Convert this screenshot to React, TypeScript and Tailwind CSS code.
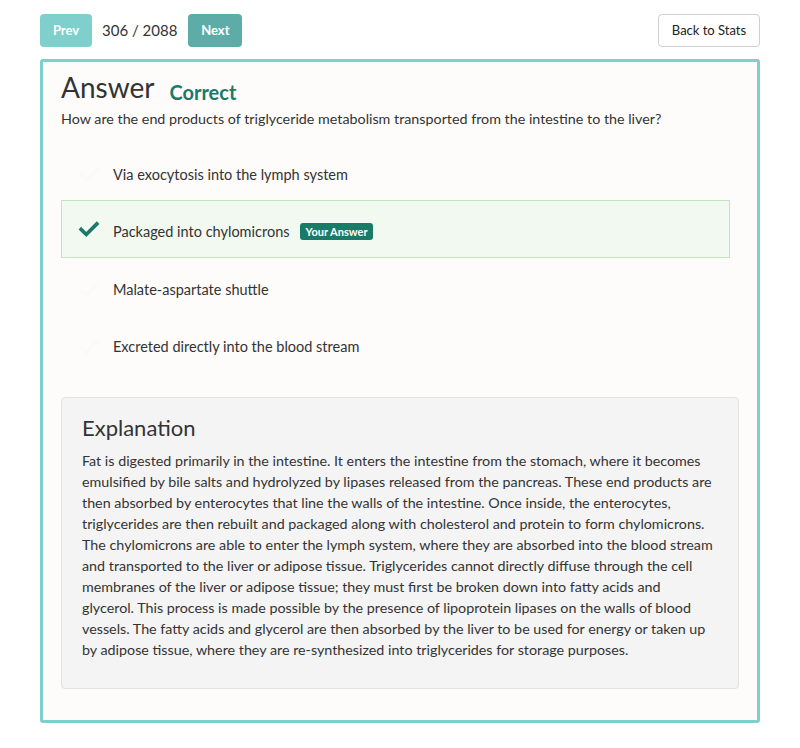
import React from 'react';

const options = [
  { text: 'Via exocytosis into the lymph system', picked: false },
  { text: 'Packaged into chylomicrons', picked: true },
  { text: 'Malate-aspartate shuttle', picked: false },
  { text: 'Excreted directly into the blood stream', picked: false },
];

const explanation = [
  'Fat is digested primarily in the intestine. It enters the intestine from the stomach, where it becomes',
  'emulsified by bile salts and hydrolyzed by lipases released from the pancreas. These end products are',
  'then absorbed by enterocytes that line the walls of the intestine. Once inside, the enterocytes,',
  'triglycerides are then rebuilt and packaged along with cholesterol and protein to form chylomicrons.',
  'The chylomicrons are able to enter the lymph system, where they are absorbed into the blood stream',
  'and transported to the liver or adipose tissue. Triglycerides cannot directly diffuse through the cell',
  'membranes of the liver or adipose tissue; they must first be broken down into fatty acids and',
  'glycerol. This process is made possible by the presence of lipoprotein lipases on the walls of blood',
  'vessels. The fatty acids and glycerol are then absorbed by the liver to be used for energy or taken up',
  'by adipose tissue, where they are re-synthesized into triglycerides for storage purposes.',
];

function Check({ className }: { className: string }) {
  return (
    <svg viewBox="0 0 24 24" className={className} fill="none">
      <path d="M3.5 12.5l5.5 5.5L20.5 6.5" stroke="currentColor" strokeWidth="4" strokeLinecap="square" />
    </svg>
  );
}

export default function App() {
  return (
    <div className="min-h-screen bg-white px-10 pt-[14px] text-[#333] font-['Lato','Open_Sans',sans-serif]">
      {/* top nav */}
      <div className="flex items-center h-[33px]">
        <button className="h-[33px] w-[52px] rounded bg-[#7fcfcc] text-white text-[13px] font-bold">Prev</button>
        <span className="ml-[10px] text-[15px] text-[#333]">306 / 2088</span>
        <button className="ml-[11px] h-[33px] w-[54px] rounded bg-[#5eaca8] text-white text-[13px] font-bold">Next</button>
        <button className="ml-auto h-[33px] w-[102px] rounded border border-[#cfcfcf] bg-white text-[13px] text-[#222]">Back to Stats</button>
      </div>

      {/* answer card */}
      <div className="mt-[12px] rounded-[3px] border-[3px] border-[#7fcfcc] bg-[#fdfcfa] pl-[18px] pr-[18px] pt-[7px] pb-[31px]">
        <div className="flex items-end">
          <h1 className="text-[28px] leading-[36px] text-[#333]">Answer</h1>
          <span className="ml-[15px] mb-[-2px] text-[20px] font-bold text-[#1a7a68]">Correct</span>
        </div>
        <p className="mt-[4px] text-[14.3px] leading-[20px]">How are the end products of triglyceride metabolism transported from the intestine to the liver?</p>

        <div className="mt-[14px] w-[669px] flex flex-col">
          {options.map((o) =>
            o.picked ? (
              <div key={o.text} className="h-[58px] flex items-center border border-[#c3e4c0] bg-[#f2f9f1] pl-[16px] pt-[5px]">
                <Check className="w-[22px] h-[22px] text-[#1a7a68] -mt-[5px]" />
                <span className="ml-[13px] text-[14.5px]">{o.text}</span>
                <span className="ml-[10px] rounded-[3px] bg-[#1a7a68] px-[6px] py-[2px] text-[11px] font-bold text-white leading-[13px]">Your Answer</span>
              </div>
            ) : (
              <div key={o.text} className="h-[57px] flex items-center border border-transparent pl-[16px] pt-[6px]">
                <Check className="w-[22px] h-[22px] text-[#fafaf8]" />
                <span className="ml-[13px] text-[14.5px]">{o.text}</span>
              </div>
            )
          )}
        </div>

        <div className="mt-[25px] rounded border border-[#e2e2e2] bg-[#f4f4f4] pl-[20px] pr-4 pt-[16px] pb-[28px]">
          <h2 className="text-[22px] leading-[28px] text-[#333]">Explanation</h2>
          <div className="mt-[8px] text-[14.3px] leading-[21px] text-[#333]">
            {explanation.map((l) => (
              <div key={l} className="whitespace-nowrap">{l}</div>
            ))}
          </div>
        </div>
      </div>
    </div>
  );
}
